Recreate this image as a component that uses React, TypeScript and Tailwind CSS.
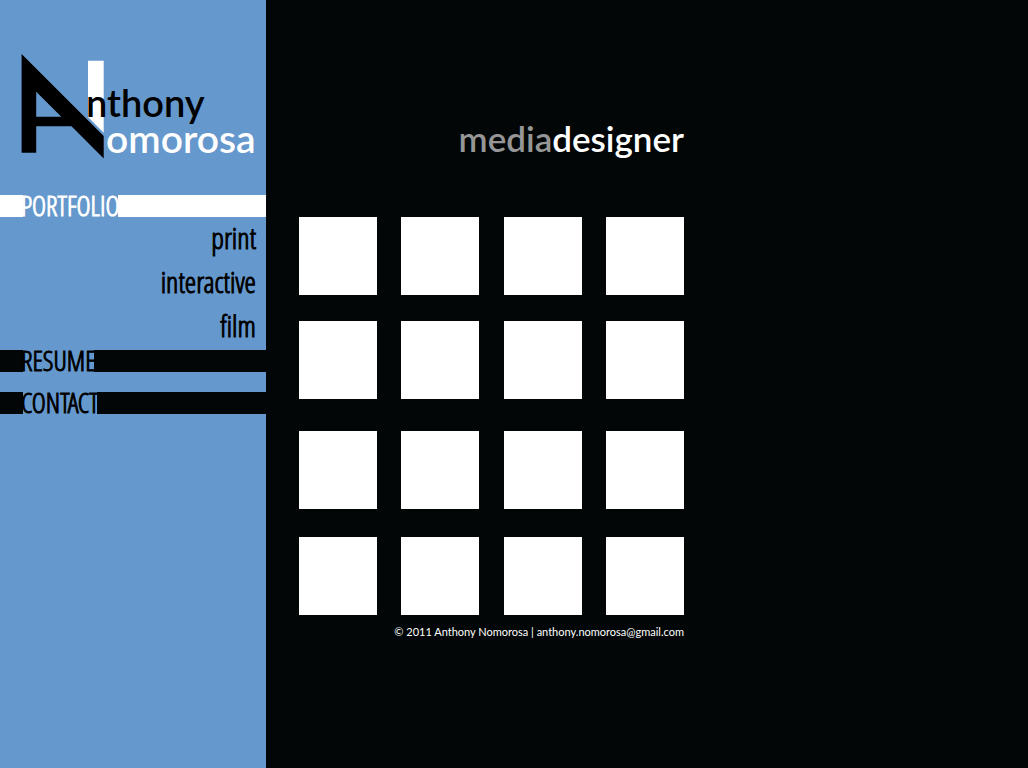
const tiles = Array.from({ length: 16 }, (_, i) => i + 1);

const subLinks = ["print", "interactive", "film"];

const condensed =
  "font-['Open_Sans_Condensed_Light','Open_Sans_Condensed','Roboto_Condensed',sans-serif] font-light [-webkit-text-stroke:1px_currentColor]";

function Logo() {
  return (
    <a href="#home" className="relative ml-[21px] block h-[106px] font-['Lato_Semibold','Lato_Medium','Lato',sans-serif] font-semibold">
      <svg className="absolute top-0 left-0" width="84" height="106" viewBox="0 0 84 106" aria-hidden="true">
        <path fill="#fff" d="M67 6.700H82.700V78.700L67 63Z" />
        <path
          fill="#000"
          fillRule="evenodd"
          d="M.6 0 82.700 82V104.600L50.500 72.300H15.200V98.800H.6ZM15.200 37.700V62.800H40.300Z"
        />
      </svg>
      <span className="absolute top-[30px] left-[65px] text-[38px] leading-[36px] text-black">nthony</span>
      <span className="absolute top-[66px] left-[85px] text-[39px] leading-[36px] text-white">omorosa</span>
    </a>
  );
}

function BarLink({ label, white = false }: { label: string; white?: boolean }) {
  const bar = white ? "bg-white" : "bg-[#020606]";
  return (
    <a href={"#" + label.toLowerCase()} className={"flex h-[22px] " + (white ? "text-white" : "text-black")}>
      <span className={"h-full w-[23px] " + bar} />
      <span className={"-mx-0.5 text-[27px] leading-[22px] " + condensed}>{label}</span>
      <span className={"h-full flex-1 " + bar} />
    </a>
  );
}

export default function App() {
  return (
    <div className="flex min-h-screen bg-[#020606] font-['Lato',sans-serif]">
      <aside className="w-[266px] shrink-0 bg-[#6598cc] pt-[54px]">
        <Logo />
        <nav className="mt-[35px]">
          <BarLink label="PORTFOLIO" white />
          <ul className="flex flex-col pr-2.5 pb-px text-right">
            {subLinks.map((label) => (
              <li key={label} className="h-11">
                <a href={"#" + label} className={"text-[29px] leading-[42px] text-black " + condensed}>
                  {label}
                </a>
              </li>
            ))}
          </ul>
          <div className="flex flex-col gap-5">
            <BarLink label="RESUME" />
            <BarLink label="CONTACT" />
          </div>
        </nav>
      </aside>
      <main className="ml-[33px] w-[385px] pt-[116px]">
        <h1 className="text-right font-['Lato_Semibold','Lato_Medium','Lato',sans-serif] text-[35px] leading-[44px] font-semibold text-white">
          <span className="text-[#969696]">media</span>designer
        </h1>
        <div className="mt-[57px] grid grid-cols-[102px_103px_102px_78px] grid-rows-[104px_110px_106px_78px]">
          {tiles.map((n) => (
            <a key={n} href={"#work-" + n} aria-label={"Work " + n} className="block size-[78px] bg-white" />
          ))}
        </div>
        <footer className="mt-[9px] text-right text-[11px] leading-4 whitespace-nowrap text-white">
          © 2011 Anthony Nomorosa | anthony.nomorosa@gmail.com
        </footer>
      </main>
    </div>
  );
}
